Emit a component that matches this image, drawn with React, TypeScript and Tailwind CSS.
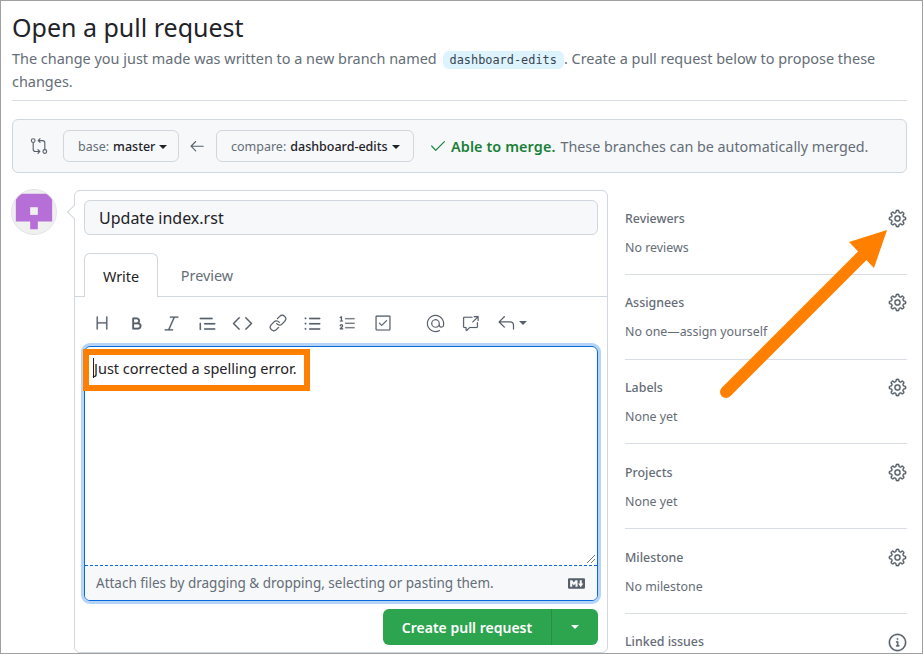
import React from 'react'
import {
  GoArrowLeft,
  GoBold,
  GoCheck,
  GoCheckbox,
  GoCode,
  GoCrossReference,
  GoGear,
  GoGitCompare,
  GoHeading,
  GoInfo,
  GoItalic,
  GoLink,
  GoListOrdered,
  GoListUnordered,
  GoMention,
  GoQuote,
  GoReply,
} from 'react-icons/go'

const Caret = ({ className = 'border-t-[#1f2328]' }: { className?: string }) => (
  <span className={'inline-block w-0 h-0 border-x-[4px] border-x-transparent border-t-[4px] ' + className} />
)

const MarkdownIcon = () => (
  <svg viewBox="0 0 16 16" width="17" height="17" fill="#57606a">
    <path d="M14.85 3c.63 0 1.15.52 1.14 1.15v7.7c0 .63-.51 1.15-1.15 1.15H1.15C.52 13 0 12.49 0 11.85v-7.7C0 3.52.52 3 1.15 3zM9 11V5H7L5.5 7 4 5H2v6h2V8l1.5 1.92L7 8v3zm2.99.5L14.5 8H13V5h-2v3H9.5z" />
  </svg>
)

const BranchButton = ({ label, value, width }: { label: string; value: string; width: string }) => (
  <div className={'flex items-center gap-[4px] h-[32px] pl-[14px] pt-[2px] border border-[#d0d7de] rounded-md text-[12.5px] text-[#656d76] ' + width}>
    <span>{label}</span>
    <span className="font-medium text-[#1f2328]">{value}</span>
    <Caret />
  </div>
)

const SidebarItem = ({
  title,
  value,
  last,
  info,
}: {
  title: string
  value?: string
  last?: boolean
  info?: boolean
}) => (
  <div className={'h-[84.75px] pt-[18px] ' + (last ? '' : 'border-b border-[#d8dee4]')}>
    <div className="flex items-center justify-between h-[22px]">
      <span className="text-[12.4px] font-medium text-[#656d76]">{title}</span>
      {info ? (
        <GoInfo size={19} className="mb-[1px] text-[#57606a] stroke-[0.4]" />
      ) : (
        <GoGear size={19} className="mb-[2px] text-[#57606a] stroke-[0.4]" />
      )}
    </div>
    {value && <p className="mt-[8.5px] text-[12.4px] leading-[18px] text-[#656d76]">{value}</p>}
  </div>
)

const toolbarIcons = [
  { Icon: GoHeading, size: 20 },
  { Icon: GoBold, size: 17 },
  { Icon: GoItalic, size: 21 },
  { Icon: GoQuote, size: 21 },
  { Icon: GoCode, size: 21 },
  { Icon: GoLink, size: 18 },
  { Icon: GoListUnordered, size: 21 },
  { Icon: GoListOrdered, size: 18 },
  { Icon: GoCheckbox, size: 18 },
]

export default function App() {
  return (
    <div className="relative w-[923px] h-[654px] overflow-hidden bg-white border border-[#a0a0a0] px-[11px] font-['Noto_Sans',sans-serif] text-[#1f2328]">
      <h1 className="pt-[8px] text-[25px] leading-[36px] font-normal">Open a pull request</h1>
      <div className="pt-[2px] pb-[7px] w-[895px] border-b border-[#d8dee4] text-[14.45px] leading-[23px] text-[#656d76]">
        The change you just made was written to a new branch named{' '}
        <code className="ml-[2px] px-[7px] py-[2px] rounded-md bg-[#ddf4ff] text-[11.9px] leading-none text-[#3a4450] font-['DejaVu_Sans_Mono',monospace]">
          dashboard-edits
        </code>
        . Create a pull request below to propose these changes.
      </div>

      <div className="mt-[18px] w-[895px] h-[54px] flex items-center pl-[17px] border border-[#d0d7de] rounded-md bg-[#f6f8fa]">
        <GoGitCompare size={18} className="text-[#57606a]" />
        <div className="ml-[15px]">
          <BranchButton label="base:" value="master" width="w-[116px]" />
        </div>
        <GoArrowLeft size={18} className="ml-[9px] mr-[10px] text-[#57606a]" />
        <BranchButton label="compare:" value="dashboard-edits" width="w-[198px]" />
        <GoCheck size={18} className="ml-[15px] text-[#1a7f37]" />
        <span className="ml-[4px] mt-[2px] text-[14.4px] font-semibold tracking-[0.1px] text-[#1a7f37]">Able to merge.</span>
        <span className="ml-[5px] mt-[2px] text-[14.3px] text-[#656d76]">These branches can be automatically merged.</span>
      </div>

      <div className="mt-[17px] ml-[-1px] flex">
        <div className="w-[46px] h-[46px] mt-[-1px] rounded-full border border-[#e1e4e8] bg-[#f0f0f0] overflow-hidden shrink-0">
          <svg viewBox="0 0 46 46" className="w-full h-full">
            <path d="M4 4h38v29H27v8h-8v-8H4z" fill="#b76fd8" />
            <rect x="19" y="18" width="8" height="8" fill="#f0f0f0" />
          </svg>
        </div>

        <div className="relative ml-[17px] w-[534px] h-[463px] border border-[#d0d7de] rounded-md px-[9px] pt-[9px]">
          <span className="absolute left-[-6px] top-[16px] w-[10px] h-[10px] rotate-45 bg-white border-l border-b border-[#d0d7de]" />
          <div className="h-[35px] flex items-center px-[14px] border border-[#d0d7de] rounded-md bg-[#f6f8fa] text-[16px]">
            Update index.rst
          </div>

          <div className="relative mt-[18px] h-[44px]">
            <div className="absolute left-[-10px] right-[-9px] bottom-0 border-b border-[#d0d7de]" />
            <div className="relative flex h-[44px]">
              <div className="w-[74px] h-[44px] pt-[2px] flex items-center justify-center bg-white border border-b-0 border-[#d0d7de] rounded-t-md text-[14.4px]">
                Write
              </div>
              <div className="w-[98px] pt-[2px] flex items-center justify-center text-[14.4px] text-[#656d76]">Preview</div>
            </div>
          </div>

          <div className="h-[49px] pt-[3px] flex items-center text-[#57606a]">
            {toolbarIcons.map(({ Icon, size }, i) => (
              <span key={i} className="w-[35.2px] flex justify-center">
                <Icon size={size} className="stroke-[0.2]" />
              </span>
            ))}
            <span className="ml-[17px] w-[35.2px] flex justify-center">
              <GoMention size={19} />
            </span>
            <span className="w-[35.2px] flex justify-center">
              <GoCrossReference size={17} className="stroke-[0.2]" />
            </span>
            <span className="w-[35.2px] flex justify-center">
              <GoReply size={20} />
            </span>
            <Caret className="ml-[-4px] border-t-[#57606a]" />
          </div>

          <div className="h-[255px] flex flex-col border border-[#0969da] rounded-md ring-[3px] ring-[#b6d4f5] overflow-hidden">
            <div className="relative flex-1 px-[8px] py-[10px] text-[14.5px] leading-[22px]">
              <span className="border-l border-[#1f2328]">Just corrected a spelling error.</span>
              <svg viewBox="0 0 10 10" className="absolute right-[1px] bottom-[1px] w-[10px] h-[10px]">
                <path d="M1 9 9 1M5 9l4-4" stroke="#777" fill="none" />
              </svg>
            </div>
            <div className="h-[35px] flex items-center justify-between pl-[11px] pr-[12px] border-t border-dashed border-[#0969da] bg-[#f6f8fa] text-[13.5px] text-[#656d76]">
              <span>Attach files by dragging &amp; dropping, selecting or pasting them.</span>
              <MarkdownIcon />
            </div>
          </div>

          <div className="mt-[8px] flex justify-end">
            <div className="w-[215px] h-[36px] flex rounded-md bg-[#2da44e] text-white">
              <div className="w-[169px] flex items-center justify-center text-[14px] font-semibold border-r border-[#298e46]">
                Create pull request
              </div>
              <div className="flex-1 flex items-center justify-center">
                <Caret className="border-t-white" />
              </div>
            </div>
          </div>
        </div>

        <div className="ml-[17px] w-[282px]">
          <SidebarItem title="Reviewers" value="No reviews" />
          <SidebarItem title="Assignees" value="No one—assign yourself" />
          <SidebarItem title="Labels" value="None yet" />
          <SidebarItem title="Projects" value="None yet" />
          <SidebarItem title="Milestone" value="No milestone" />
          <SidebarItem title="Linked issues" last info />
        </div>
      </div>

      {/* annotation overlays */}
      <div className="absolute left-[82px] top-[348px] w-[227px] h-[42px] border-[6px] border-[#ff8000]" />
      <svg className="absolute left-[-1px] top-[-1px] pointer-events-none" width="923" height="654">
        <path d="M726 392 862 256" stroke="#ff8000" strokeWidth="12" strokeLinecap="round" fill="none" />
        <path d="M887 230 849 242 874 268z" fill="#ff8000" />
      </svg>
    </div>
  )
}
